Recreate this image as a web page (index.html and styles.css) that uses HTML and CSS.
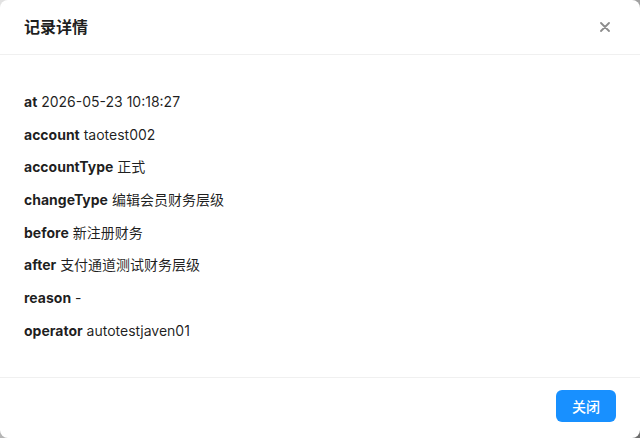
FILE: index.html
```html
<!DOCTYPE html>
<html lang="zh-CN">
<head>
<meta charset="utf-8">
<title>记录详情</title>
<link rel="stylesheet" href="styles.css">
</head>
<body>
<div class="modal">
  <div class="modal-header">
    <div class="modal-title">记录详情</div>
    <button class="modal-close" aria-label="Close">
      <svg width="10" height="10" viewBox="0 0 10 10"><path d="M1 1 L9 9 M9 1 L1 9" stroke="currentColor" stroke-width="1.8" stroke-linecap="round"/></svg>
    </button>
  </div>
  <div class="modal-body">
    <p class="row"><b>at</b> 2026-05-23 10:18:27</p>
    <p class="row"><b>account</b> taotest002</p>
    <p class="row"><b>accountType</b> 正式</p>
    <p class="row"><b>changeType</b> 编辑会员财务层级</p>
    <p class="row"><b>before</b> 新注册财务</p>
    <p class="row"><b>after</b> 支付通道测试财务层级</p>
    <p class="row"><b>reason</b> -</p>
    <p class="row"><b>operator</b> autotestjaven01</p>
  </div>
  <div class="modal-footer">
    <button class="btn-primary">关闭</button>
  </div>
</div>
</body>
</html>
```

FILE: styles.css
```css
* { box-sizing: border-box; }
html, body { margin: 0; padding: 0; height: 100%; }
body {
  background: linear-gradient(135deg, #e2e2e2 0%, #a0a0a0 60%, #6e6e6e 100%);
  font-family: Inter, "Noto Sans CJK SC", sans-serif;
  color: rgba(0,0,0,0.88);
}
.modal {
  height: 100vh;
  background: #fff;
  border-radius: 8px;
  display: flex;
  flex-direction: column;
  overflow: hidden;
}
.modal-header {
  display: flex;
  align-items: center;
  justify-content: space-between;
  padding: 16px 24px;
  border-bottom: 1px solid #f0f0f0;
  height: 55px;
}
.modal-title {
  font-size: 16px;
  font-weight: 600;
  line-height: 22px;
  color: rgba(0,0,0,0.88);
}
.modal-close {
  border: 0;
  background: none;
  padding: 0;
  margin-right: 6px;
  width: 10px;
  height: 10px;
  color: rgba(0,0,0,0.45);
  display: flex;
  cursor: pointer;
}
.modal-body {
  flex: 1;
  padding: 36px 24px 0;
  font-size: 14px;
}
.row {
  margin: 0 0 10.7px;
  line-height: 22px;
}
.row b { font-weight: 700; }
.modal-footer {
  border-top: 1px solid #f0f0f0;
  padding: 12px 24px 16px;
  display: flex;
  justify-content: flex-end;
}
.btn-primary {
  height: 32px;
  width: 60px;
  border: 0;
  border-radius: 6px;
  background: #1890ff;
  color: #fff;
  font-family: Inter, "Noto Sans CJK SC", sans-serif;
  font-size: 14px;
  font-weight: 500;
  cursor: pointer;
}
```
